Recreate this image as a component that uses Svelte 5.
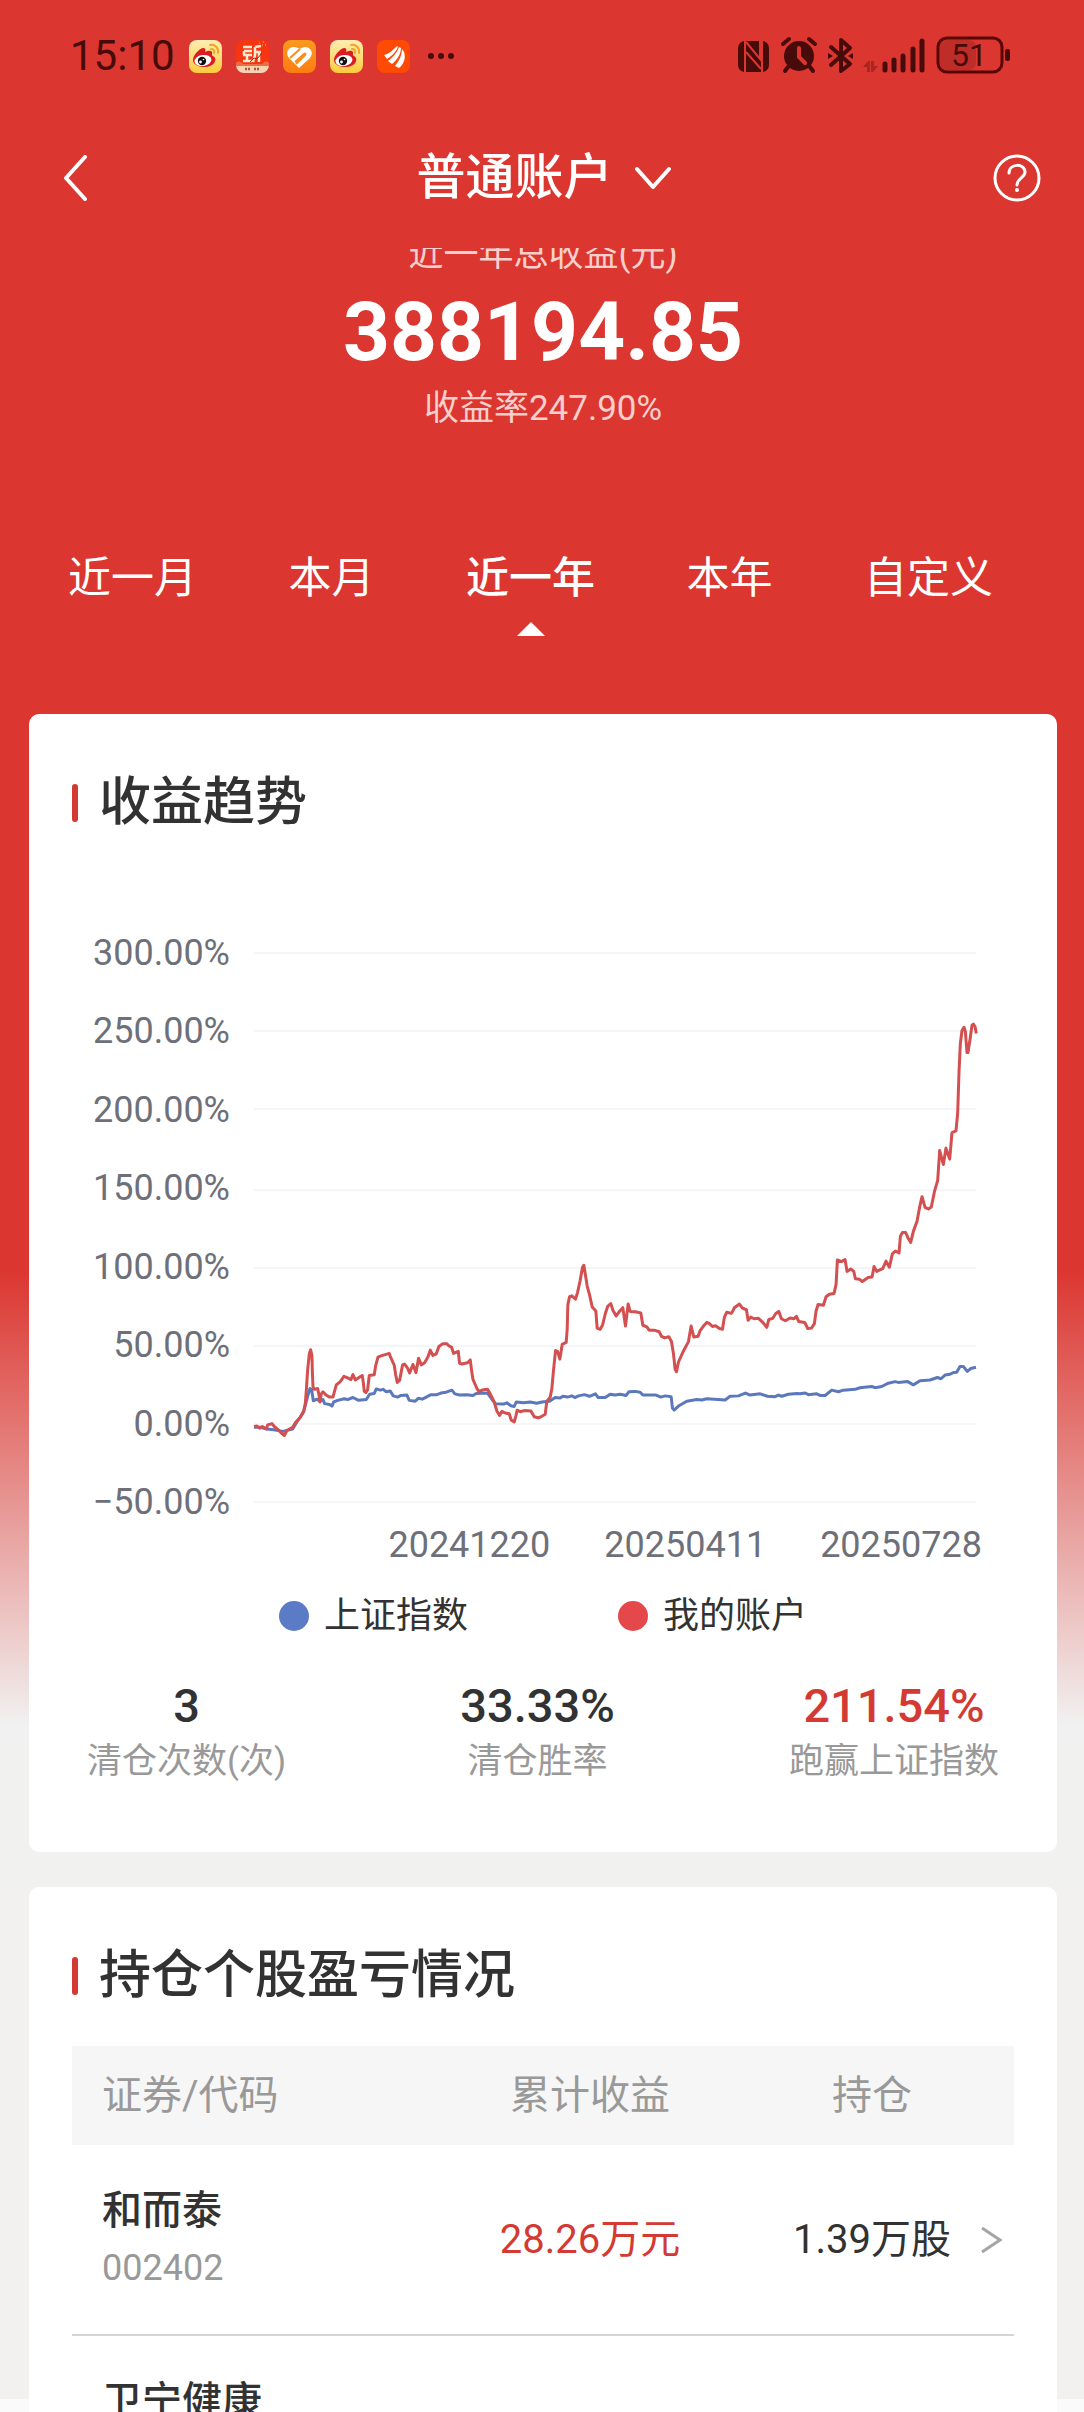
<script lang="ts">
	type Point = [number, number];

	type Holding = {
		name: string;
		code?: string;
		profit?: string;
		shares?: string;
	};

	const tabs = ['近一月', '本月', '近一年', '本年', '自定义'];
	let activeTab = '近一年';

	const yLabels = ['300.00%', '250.00%', '200.00%', '150.00%', '100.00%', '50.00%', '0.00%', '−50.00%'];
	const xLabels = ['20241220', '20250411', '20250728'];

	// gridlines share the coordinate space of the two series
	const gridLines = [128, 319, 510, 709, 900, 1091, 1282, 1473];

	const indexSeries: Point[] = [
		[0, 1290], [19, 1290], [39, 1294], [59, 1296], [87, 1300], [116, 1294], [131, 1274], [149, 1252],
		[161, 1214], [168, 1195], [173, 1198], [178, 1225], [189, 1221], [198, 1226], [207, 1222], [212, 1232],
		[227, 1234], [234, 1238], [239, 1228], [251, 1224], [271, 1220], [281, 1222], [297, 1217], [314, 1224],
		[337, 1222], [347, 1209], [361, 1207], [367, 1196], [379, 1199], [388, 1197], [397, 1203], [409, 1201],
		[418, 1213], [431, 1216], [441, 1212], [459, 1211], [466, 1224], [484, 1226], [493, 1219], [505, 1221],
		[517, 1216], [531, 1210], [549, 1210], [561, 1206], [577, 1204], [594, 1199], [603, 1208], [617, 1211],
		[639, 1210], [657, 1212], [667, 1207], [701, 1206], [713, 1220], [724, 1232], [749, 1233], [759, 1230],
		[771, 1237], [781, 1239], [787, 1228], [809, 1230], [829, 1228], [849, 1231], [864, 1228], [887, 1226],
		[904, 1217], [919, 1218], [927, 1214], [941, 1216], [954, 1213], [963, 1217], [974, 1213], [992, 1210],
		[1007, 1214], [1025, 1208], [1033, 1217], [1054, 1217], [1069, 1209], [1084, 1211], [1099, 1209], [1117, 1212],
		[1125, 1203], [1144, 1202], [1159, 1204], [1167, 1211], [1207, 1211], [1221, 1216], [1234, 1213], [1252, 1215],
		[1256, 1243], [1261, 1248], [1274, 1238], [1299, 1226], [1329, 1222], [1344, 1223], [1359, 1220], [1414, 1223],
		[1429, 1214], [1454, 1213], [1475, 1206], [1489, 1211], [1519, 1208], [1541, 1214], [1564, 1215], [1574, 1211],
		[1584, 1214], [1604, 1209], [1629, 1207], [1639, 1208], [1654, 1206], [1664, 1210], [1689, 1208], [1699, 1212],
		[1714, 1212], [1734, 1199], [1754, 1203], [1769, 1199], [1804, 1197], [1819, 1193], [1854, 1190], [1864, 1193],
		[1884, 1190], [1904, 1182], [1924, 1178], [1934, 1180], [1962, 1178], [1979, 1186], [1999, 1176], [2029, 1174],
		[2051, 1168], [2062, 1171], [2074, 1162], [2089, 1160], [2099, 1156], [2109, 1155], [2119, 1141], [2129, 1141],
		[2141, 1153], [2151, 1146], [2167, 1143]
	];

	const accountSeries: Point[] = [
		[0, 1288], [9, 1287], [17, 1292], [25, 1288], [37, 1294], [41, 1284], [54, 1281], [61, 1288],
		[74, 1297], [82, 1304], [91, 1310], [99, 1298], [116, 1290], [125, 1278], [139, 1266], [149, 1250],
		[154, 1232], [157, 1200], [161, 1150], [166, 1110], [170, 1100], [174, 1115], [175, 1150], [177, 1190],
		[180, 1197], [191, 1195], [195, 1210], [198, 1228], [202, 1208], [207, 1203], [216, 1211], [227, 1216],
		[237, 1216], [241, 1204], [247, 1186], [259, 1178], [270, 1165], [281, 1169], [291, 1173], [297, 1161],
		[304, 1174], [315, 1168], [325, 1163], [328, 1180], [331, 1202], [336, 1205], [341, 1198], [346, 1163],
		[361, 1161], [365, 1140], [372, 1118], [381, 1115], [394, 1112], [406, 1109], [411, 1120], [421, 1138],
		[425, 1160], [430, 1180], [437, 1175], [446, 1137], [452, 1135], [461, 1145], [467, 1157], [477, 1136],
		[486, 1156], [494, 1121], [502, 1137], [512, 1132], [522, 1118], [529, 1101], [537, 1114], [547, 1110],
		[555, 1092], [567, 1085], [579, 1085], [584, 1090], [593, 1094], [599, 1109], [613, 1104], [617, 1133],
		[624, 1135], [641, 1132], [649, 1125], [653, 1150], [657, 1172], [669, 1195], [675, 1202], [689, 1198],
		[701, 1197], [709, 1208], [721, 1228], [729, 1250], [737, 1261], [744, 1251], [754, 1255], [766, 1257],
		[772, 1272], [781, 1277], [786, 1262], [790, 1248], [799, 1252], [811, 1249], [831, 1250], [841, 1264],
		[853, 1267], [864, 1263], [874, 1258], [879, 1226], [889, 1216], [894, 1195], [899, 1150], [905, 1102],
		[911, 1104], [918, 1123], [925, 1087], [937, 1082], [940, 1050], [942, 990], [947, 970], [954, 968],
		[965, 976], [971, 960], [979, 930], [986, 898], [990, 893], [995, 918], [1000, 944], [1007, 965],
		[1015, 995], [1026, 1005], [1030, 1047], [1039, 1050], [1046, 1040], [1055, 1010], [1062, 993], [1071, 987],
		[1077, 1003], [1087, 1017], [1097, 1006], [1107, 997], [1115, 1042], [1123, 988], [1129, 1006], [1144, 1007],
		[1161, 1010], [1167, 1040], [1179, 1044], [1186, 1052], [1201, 1052], [1216, 1056], [1223, 1067], [1233, 1071],
		[1245, 1068], [1253, 1080], [1259, 1110], [1264, 1148], [1268, 1154], [1274, 1130], [1289, 1103], [1304, 1080],
		[1312, 1042], [1320, 1069], [1333, 1067], [1339, 1053], [1351, 1040], [1359, 1033], [1367, 1036], [1376, 1043],
		[1385, 1041], [1397, 1048], [1406, 1050], [1412, 1020], [1419, 1008], [1433, 1011], [1442, 997], [1457, 988],
		[1466, 998], [1478, 1002], [1483, 1028], [1491, 1020], [1501, 1024], [1514, 1023], [1527, 1033], [1539, 1045],
		[1545, 1026], [1557, 1023], [1566, 1011], [1575, 1006], [1583, 1024], [1595, 1029], [1609, 1022], [1621, 1024],
		[1628, 1018], [1635, 1031], [1653, 1033], [1662, 1048], [1673, 1047], [1682, 1036], [1687, 1005], [1693, 989],
		[1709, 991], [1717, 970], [1727, 964], [1741, 962], [1747, 940], [1751, 880], [1763, 884], [1774, 879],
		[1780, 908], [1791, 902], [1800, 908], [1805, 926], [1817, 927], [1826, 933], [1843, 923], [1855, 922],
		[1861, 896], [1869, 908], [1887, 901], [1897, 883], [1907, 898], [1916, 865], [1925, 858], [1936, 863],
		[1940, 822], [1946, 813], [1956, 813], [1963, 826], [1971, 837], [1979, 810], [1990, 785], [1998, 750],
		[2005, 725], [2014, 751], [2024, 755], [2033, 750], [2043, 710], [2052, 685], [2058, 612], [2069, 646],
		[2077, 606], [2088, 633], [2095, 568], [2107, 564], [2112, 520], [2116, 420], [2120, 350], [2125, 318],
		[2131, 310], [2135, 320], [2140, 372], [2143, 372], [2149, 340], [2155, 305], [2159, 302], [2164, 308],
		[2168, 325]
	];

	const stats = [
		{ value: '3', label: '清仓次数(次)', up: false },
		{ value: '33.33%', label: '清仓胜率', up: false },
		{ value: '211.54%', label: '跑赢上证指数', up: true }
	];

	const holdings: Holding[] = [
		{ name: '和而泰', code: '002402', profit: '28.26万元', shares: '1.39万股' },
		{ name: '卫宁健康' }
	];

	function toPoints(series: Point[]) {
		return series.map((p) => p.join(',')).join(' ');
	}
</script>

{#snippet weibo()}
	<svg class="app-icon" viewBox="0 0 33 33" aria-hidden="true">
		<defs>
			<linearGradient id="weibo-bg" x1="0" y1="0" x2="0" y2="1">
				<stop offset="0" stop-color="#fdeeb5" />
				<stop offset="1" stop-color="#fccb3c" />
			</linearGradient>
		</defs>
		<rect width="33" height="33" rx="8" fill="url(#weibo-bg)" />
		<path d="M4 20c0-5 6-11 10-12 2 0 3 1 2 4 4-2 8-2 7 2 0 1 0 2 1 2 2 1 3 3 2 5-1 4-6 6-11 6-6 0-11-3-11-7z" fill="#dc1c22" />
		<ellipse cx="14" cy="20.500" rx="8.500" ry="5.500" fill="#fff" transform="rotate(-8 14 20.500)" />
		<circle cx="13" cy="21" r="4.200" fill="#111" />
		<circle cx="11.500" cy="22" r="1.400" fill="#fff" />
		<circle cx="14.500" cy="19.500" r="0.800" fill="#fff" />
		<path d="M21 5c5-1 9 3 8 8M22 9c2 0 4 1 3 4" fill="none" stroke="#efa524" stroke-width="2" stroke-linecap="round" />
	</svg>
{/snippet}

<div class="screen">
	<div class="status-bar">
		<div class="status-left">
			<span class="clock">15:10</span>
			{@render weibo()}
			<svg class="app-icon" viewBox="0 0 33 33" aria-hidden="true">
				<rect width="33" height="33" rx="8" fill="#f63512" />
				<path d="M0 24h33v1a8 8 0 0 1-8 8H8a8 8 0 0 1-8-8z" fill="#f7d3b4" />
				<path d="M0 23c3-3 5-1 7 1h19c2-2 4-4 7-1v3H0z" fill="#ee6c45" />
				<path d="M7 7h9M8 11h8M7 15h9M11 15v7M7 21h9M8 11v4M19 7l6-1M19 7v8l-2 7M19 12h6M23 12v10" fill="none" stroke="#ffe9cf" stroke-width="2.500" />
				<path d="M14 22l4-4 3 1 5-6" fill="none" stroke="#a52a13" stroke-width="1" />
				<path d="M9 29h6M18 29h6" stroke="#b5523a" stroke-width="2.500" stroke-dasharray="2 1" />
				<path d="M23 3h1M27 2h1M29 5h1M26 5h1" stroke="#ffc27a" stroke-width="1" />
			</svg>
			<svg class="app-icon" viewBox="0 0 33 33" aria-hidden="true">
				<defs>
					<linearGradient id="heart-bg" x1="0" y1="0" x2="0" y2="1">
						<stop offset="0" stop-color="#fb9a1e" />
						<stop offset="1" stop-color="#fd7c12" />
					</linearGradient>
				</defs>
				<rect width="33" height="33" rx="8" fill="url(#heart-bg)" />
				<path d="M16 28L6 18C2 13 5 7 11 7c3 0 4 1 6 2 1-1 3-2 5-2 6 0 9 6 5 11z" fill="#fff" />
				<path d="M7 18l10-9M13 24l9-9c1-1 0-2-1-1l-9 8" fill="none" stroke="#fb8d18" stroke-width="2" />
			</svg>
			{@render weibo()}
			<svg class="app-icon" viewBox="0 0 33 33" aria-hidden="true">
				<rect width="33" height="33" rx="8" fill="#ff4a05" />
				<path d="M7 15c5-1 9-5 13-9l1 1c-2 5-6 9-11 12z" fill="#fff" />
				<path d="M11 21c5-4 9-8 11-14l2 1c0 6-4 12-9 16z" fill="#fff" />
				<path d="M18 26c4-5 7-11 7-17l2 3c2 6 0 12-5 16z" fill="#fff" />
			</svg>
			<svg class="more" viewBox="0 0 26 6" aria-hidden="true">
				<circle cx="3" cy="3" r="3" />
				<circle cx="13" cy="3" r="3" />
				<circle cx="23" cy="3" r="3" />
			</svg>
		</div>
		<svg class="status-right" viewBox="0 0 274 40" aria-hidden="true">
			<!-- nfc -->
			<rect x="0" y="5" width="31" height="31" rx="7" />
			<path d="M7 5v31M8 6l14 17V5M8 16l15 17M24 5v31" fill="none" stroke="#dc3630" stroke-width="2" />
			<!-- alarm -->
			<circle cx="61" cy="20" r="15" />
			<path d="M45 8l6-5M77 8l-6-5M50 31l-3 4M72 31l3 4" fill="none" stroke="#470b09" stroke-width="4" stroke-linecap="round" />
			<path d="M61 12v9l6 6" fill="none" stroke="#dc3630" stroke-width="4" stroke-linecap="round" />
			<!-- bluetooth -->
			<path d="M93 11l19 17-9 7V4l9 8-19 17" fill="none" stroke="#470b09" stroke-width="4" stroke-linejoin="round" stroke-linecap="round" />
			<path d="M90 17l5 3-5 3zM115 17l-5 3 5 3z" />
			<!-- signal -->
			<path d="M125 31l5-6h2v11h-3v-5zM140 30l-5 6h-2V25h3v5z" opacity="0.35" />
			<path d="M147 34v-6M156 34v-10M165 34V20M175 34V13M184 34V5" fill="none" stroke="#470b09" stroke-width="5" stroke-linecap="round" />
			<!-- battery -->
			<rect x="202" y="4" width="36" height="30" rx="7" opacity="0.2" />
			<rect x="200" y="2" width="64" height="34" rx="9" fill="none" stroke="#570605" stroke-width="3" />
			<rect x="267" y="13" width="5" height="12" rx="2" />
			<text x="231" y="30" text-anchor="middle" font-size="32">51</text>
		</svg>
	</div>

	<header class="nav">
		<button class="icon-button" aria-label="返回">
			<svg width="26" height="46" viewBox="0 0 26 46">
				<path d="M23 2L4 23l19 21" fill="none" stroke="#fff" stroke-width="4" stroke-linecap="round" stroke-linejoin="round" />
			</svg>
		</button>
		<button class="account">
			普通账户
			<svg width="36" height="24" viewBox="0 0 36 24" aria-hidden="true">
				<path d="M2 3l16 18L34 3" fill="none" stroke="#fff" stroke-width="4" stroke-linecap="round" stroke-linejoin="round" />
			</svg>
		</button>
		<button class="icon-button" aria-label="帮助">
			<svg width="48" height="48" viewBox="0 0 48 48">
				<circle cx="24" cy="24" r="22" fill="none" stroke="#fff" stroke-width="3" />
				<path d="M16 19c0-10 16-10 16-1 0 6-8 6-8 13" fill="none" stroke="#fff" stroke-width="3" stroke-linecap="round" />
				<circle cx="24" cy="36" r="2" fill="#fff" />
			</svg>
		</button>
	</header>

	<main class="scroller">
		<section class="summary">
			<p class="note">近一年总收益(元)</p>
			<p class="total">388194.85</p>
			<p class="note">收益率247.90%</p>
		</section>

		<nav class="tabs">
			{#each tabs as tab}
				<button class="tab" class:active={tab === activeTab} on:click={() => (activeTab = tab)}>{tab}</button>
			{/each}
		</nav>

		<section class="card">
			<h2>收益趋势</h2>
			<div class="chart">
				<div class="y-axis">
					{#each yLabels as label}
						<span>{label}</span>
					{/each}
				</div>
				<svg class="plot" viewBox="0 128 2167 1345" preserveAspectRatio="none" role="img" aria-label="收益趋势">
					{#each gridLines as y}
						<line class="grid-line" x1="0" x2="2167" y1={y} y2={y} />
					{/each}
					<polyline class="line index" points={toPoints(indexSeries)} />
					<polyline class="line mine" points={toPoints(accountSeries)} />
				</svg>
			</div>
			<div class="x-axis">
				{#each xLabels as label}
					<span>{label}</span>
				{/each}
			</div>
			<div class="legend">
				<span class="legend-item"><i class="dot index"></i>上证指数</span>
				<span class="legend-item"><i class="dot mine"></i>我的账户</span>
			</div>
			<div class="stats">
				{#each stats as stat}
					<div class="stat">
						<strong class:up={stat.up}>{stat.value}</strong>
						<span>{stat.label}</span>
					</div>
				{/each}
			</div>
		</section>

		<section class="card">
			<h2>持仓个股盈亏情况</h2>
			<table>
				<thead>
					<tr>
						<th class="col-name">证券/代码</th>
						<th class="col-profit">累计收益</th>
						<th class="col-shares">持仓</th>
						<th class="col-more"></th>
					</tr>
				</thead>
				<tbody>
					{#each holdings as item}
						<tr>
							<td class="col-name">
								<div class="name">{item.name}</div>
								{#if item.code}<div class="code">{item.code}</div>{/if}
							</td>
							<td class="col-profit up">{item.profit ?? ''}</td>
							<td class="col-shares">{item.shares ?? ''}</td>
							<td class="col-more">
								{#if item.shares}
									<svg width="22" height="28" viewBox="0 0 22 28" aria-hidden="true">
										<path d="M1 2l18 12L1 26" fill="none" stroke="#a5a5a5" stroke-width="3" />
									</svg>
								{/if}
							</td>
						</tr>
					{/each}
				</tbody>
			</table>
		</section>
	</main>
</div>

<style>
	:global(body) {
		margin: 0;
	}

	.screen {
		height: 100vh;
		display: flex;
		flex-direction: column;
		overflow: hidden;
		background:
			linear-gradient(#fafafa, #fafafa) bottom / 100% 13px no-repeat,
			linear-gradient(#dc3630 1270px, #f1f1f1 1725px, #f3f1ef 2100px);
		font-family: Roboto, 'Noto Sans CJK SC', sans-serif;
		color: #323232;
	}

	button {
		padding: 0;
		border: none;
		background: none;
		color: inherit;
		font: inherit;
		cursor: pointer;
	}

	p,
	h2 {
		margin: 0;
	}

	svg {
		display: block;
	}

	.up {
		color: #d33a33;
	}

	/* status bar */
	.status-bar {
		flex: none;
		height: 112px;
		padding: 0 72px 0 70px;
		box-sizing: border-box;
		display: flex;
		justify-content: space-between;
		align-items: center;
		color: #470b09;
	}

	.status-left {
		display: flex;
		align-items: center;
		gap: 14px;
	}

	.clock {
		font-size: 42px;
		line-height: 44px;
	}

	.app-icon {
		width: 33px;
		height: 33px;
	}

	.more {
		width: 26px;
		margin-left: 4px;
		fill: #470b09;
	}

	.status-right {
		width: 274px;
		height: 40px;
		fill: #470b09;
	}

	/* title bar */
	.nav {
		flex: none;
		height: 136px;
		padding: 0 43px 4px 62px;
		box-sizing: border-box;
		display: flex;
		justify-content: space-between;
		align-items: center;
		color: #fff;
	}

	.account {
		margin-left: 6px;
		display: flex;
		align-items: center;
		gap: 22px;
		font-size: 49px;
		line-height: 56px;
		font-weight: 500;
	}

	.scroller {
		flex: 1;
		min-height: 0;
		overflow: hidden;
	}

	.summary {
		margin-top: -11px;
		padding-left: 2px;
		display: flex;
		flex-direction: column;
		gap: 17px;
		text-align: center;
	}

	.note {
		font-size: 35px;
		line-height: 36px;
		color: #f8cfcc;
	}

	.total {
		font-size: 82px;
		line-height: 84px;
		font-weight: 700;
		color: #fff;
	}

	.tabs {
		margin: 127px 56px 78px 33px;
		display: flex;
	}

	.tab {
		flex: 1;
		font-size: 43px;
		line-height: 48px;
		color: #fff;
	}

	.tab::after {
		content: '';
		display: block;
		width: 0;
		margin: 20px auto 0;
		border: 14px solid transparent;
		border-top: none;
	}

	.tab.active {
		font-weight: 500;
	}

	.tab.active::after {
		border-bottom-color: #fff;
	}

	/* cards */
	.card {
		margin: 0 27px 35px 29px;
		padding: 59px 43px 72px;
		border-radius: 10px;
		background: #fff;
	}

	h2 {
		display: flex;
		align-items: center;
		gap: 21px;
		font-size: 52px;
		line-height: 60px;
		font-weight: 500;
	}

	h2::before {
		content: '';
		width: 6px;
		height: 38px;
		border-radius: 3px;
		background: #d33a33;
	}

	.chart {
		margin-top: 102px;
		padding-right: 38px;
		display: flex;
		gap: 24px;
	}

	.y-axis {
		width: 158px;
		height: 585px;
		display: flex;
		flex-direction: column;
		justify-content: space-between;
		text-align: right;
		font-size: 36px;
		line-height: 36px;
		color: #6e7079;
	}

	.plot {
		flex: 1;
		min-width: 0;
		height: 549px;
		margin: 18px 0;
		overflow: visible;
	}

	.grid-line {
		stroke: #f4f5f9;
		stroke-width: 2;
		vector-effect: non-scaling-stroke;
	}

	.line {
		fill: none;
		stroke-width: 3;
		stroke-linejoin: round;
		vector-effect: non-scaling-stroke;
	}

	.line.index {
		stroke: #5b78bd;
	}

	.line.mine {
		stroke: #d34f50;
	}

	.x-axis {
		margin-top: 7px;
		padding-right: 32px;
		display: flex;
		justify-content: flex-end;
		gap: 54px;
		font-size: 36px;
		line-height: 36px;
		color: #6e7079;
	}

	.legend {
		margin-top: 35px;
		display: flex;
		justify-content: center;
		gap: 150px;
		font-size: 36px;
		line-height: 36px;
	}

	.legend-item {
		display: flex;
		align-items: center;
		gap: 15px;
	}

	.dot {
		width: 30px;
		height: 30px;
		border-radius: 50%;
	}

	.dot.index {
		background: #5b7bc6;
	}

	.dot.mine {
		background: #e4484b;
	}

	.stats {
		margin: 48px 15px 0;
		display: flex;
		justify-content: space-between;
	}

	.stat {
		display: flex;
		flex-direction: column;
		align-items: center;
		gap: 14px;
		font-size: 35px;
		line-height: 36px;
		color: #999;
	}

	.stat strong {
		font-size: 47px;
		line-height: 48px;
		font-weight: 500;
	}

	.stat strong:not(.up) {
		color: #323232;
	}

	/* holdings */
	table {
		width: 100%;
		margin-top: 40px;
		table-layout: fixed;
		border-collapse: collapse;
		font-size: 40px;
		line-height: 44px;
		text-align: center;
	}

	th {
		height: 99px;
		padding: 0;
		background: #f6f6f6;
		font-weight: 400;
		color: #999;
	}

	td {
		height: 189px;
		padding: 0;
		border-bottom: 2px solid #d5d5d5;
	}

	.col-name {
		width: 37%;
		padding-left: 30px;
		box-sizing: border-box;
		text-align: left;
	}

	td.col-name {
		padding-top: 44px;
		box-sizing: border-box;
		vertical-align: top;
	}

	.col-profit {
		width: 36%;
	}

	.col-shares {
		width: 23%;
		padding-left: 8px;
		box-sizing: border-box;
	}

	.col-more {
		width: 4%;
		padding-left: 5px;
		box-sizing: border-box;
	}

	.name {
		font-weight: 500;
	}

	.code {
		margin-top: 17px;
		font-size: 36px;
		line-height: 36px;
		color: #999;
	}
</style>
